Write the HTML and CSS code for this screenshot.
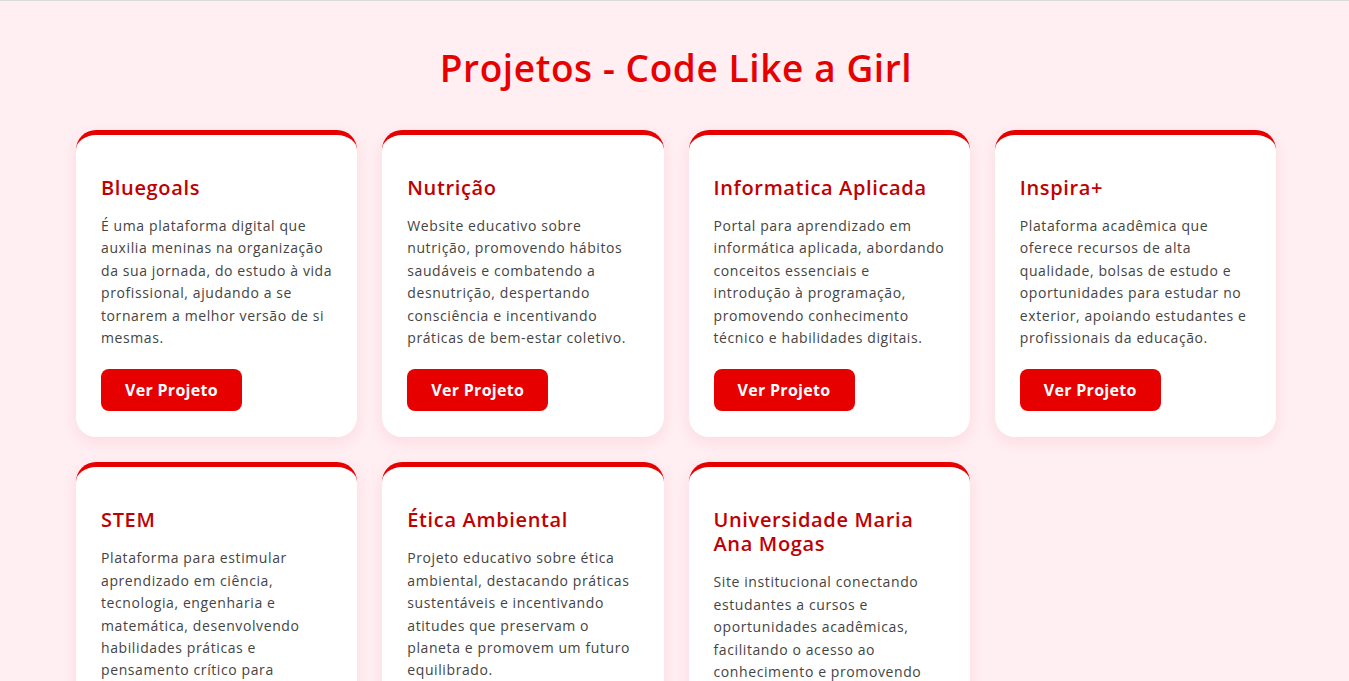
FILE: index.html
```html
<!DOCTYPE html>
<html lang="pt-BR">
<head>
<meta charset="UTF-8">
<title>Projetos - Code Like a Girl</title>
<link rel="stylesheet" href="styles.css">
</head>
<body>
<div class="page">
  <h1 class="page-title">Projetos - Code Like a Girl</h1>
  <div class="grid">
    <div class="card">
      <h3 class="card-title">Bluegoals</h3>
      <p class="card-text">É uma plataforma digital que auxilia meninas na organização da sua jornada, do estudo à vida profissional, ajudando a se tornarem a melhor versão de si mesmas.</p>
      <a class="btn" href="#">Ver Projeto</a>
    </div>
    <div class="card">
      <h3 class="card-title">Nutrição</h3>
      <p class="card-text">Website educativo sobre nutrição, promovendo hábitos saudáveis e combatendo a desnutrição, despertando consciência e incentivando práticas de bem-estar coletivo.</p>
      <a class="btn" href="#">Ver Projeto</a>
    </div>
    <div class="card">
      <h3 class="card-title">Informatica Aplicada</h3>
      <p class="card-text">Portal para aprendizado em informática aplicada, abordando conceitos essenciais e introdução à programação, promovendo conhecimento técnico e habilidades digitais.</p>
      <a class="btn" href="#">Ver Projeto</a>
    </div>
    <div class="card">
      <h3 class="card-title">Inspira+</h3>
      <p class="card-text">Plataforma acadêmica que oferece recursos de alta qualidade, bolsas de estudo e oportunidades para estudar no exterior, apoiando estudantes e profissionais da educação.</p>
      <a class="btn" href="#">Ver Projeto</a>
    </div>
    <div class="card">
      <h3 class="card-title">STEM</h3>
      <p class="card-text">Plataforma para estimular aprendizado em ciência, tecnologia, engenharia e matemática, desenvolvendo habilidades práticas e pensamento crítico para meninas.</p>
      <a class="btn" href="#">Ver Projeto</a>
    </div>
    <div class="card">
      <h3 class="card-title">Ética Ambiental</h3>
      <p class="card-text">Projeto educativo sobre ética ambiental, destacando práticas sustentáveis e incentivando atitudes que preservam o planeta e promovem um futuro equilibrado.</p>
      <a class="btn" href="#">Ver Projeto</a>
    </div>
    <div class="card">
      <h3 class="card-title">Universidade Maria Ana Mogas</h3>
      <p class="card-text">Site institucional conectando estudantes a cursos e oportunidades acadêmicas, facilitando o acesso ao conhecimento e promovendo inclusão educacional.</p>
      <a class="btn" href="#">Ver Projeto</a>
    </div>
  </div>
</div>
</body>
</html>
```

FILE: styles.css
```css
* { box-sizing: border-box; }

body {
  margin: 0;
  background: #ffeef2;
  font-family: "Open Sans", "Noto Sans", sans-serif;
  border-top: 1px solid #dadada;
}

.page {
  padding: 44px 0 40px 3px;
}

.page-title {
  margin: 0 0 39px;
  text-align: center;
  color: #e60000;
  font-size: 37px;
  font-weight: 600;
  line-height: 46px;
  letter-spacing: 0.6px;
}

.grid {
  max-width: 1200px;
  margin: 0 auto;
  display: grid;
  grid-template-columns: repeat(4, 1fr);
  gap: 25px;
}

.card {
  background: #ffffff;
  border-top: 5px solid #e60000;
  border-radius: 20px;
  padding: 25px 25px 26px;
  box-shadow: 0 5px 15px rgba(200, 0, 40, 0.08);
  display: flex;
  flex-direction: column;
  align-items: flex-start;
}

.card-title {
  margin: 16px 0 15px;
  color: #c00000;
  font-size: 20px;
  font-weight: 600;
  line-height: 24px;
  letter-spacing: 0.65px;
}

.card-text {
  margin: 0 0 20px;
  color: #444444;
  font-size: 14px;
  line-height: 22.4px;
  letter-spacing: 0.6px;
}

.btn {
  display: inline-flex;
  align-items: center;
  justify-content: center;
  height: 42px;
  width: 141px;
  background: #e60000;
  color: #ffffff;
  border-radius: 8px;
  text-decoration: none;
  font-weight: 700;
  font-size: 16px;
  letter-spacing: 0.3px;
}
```
